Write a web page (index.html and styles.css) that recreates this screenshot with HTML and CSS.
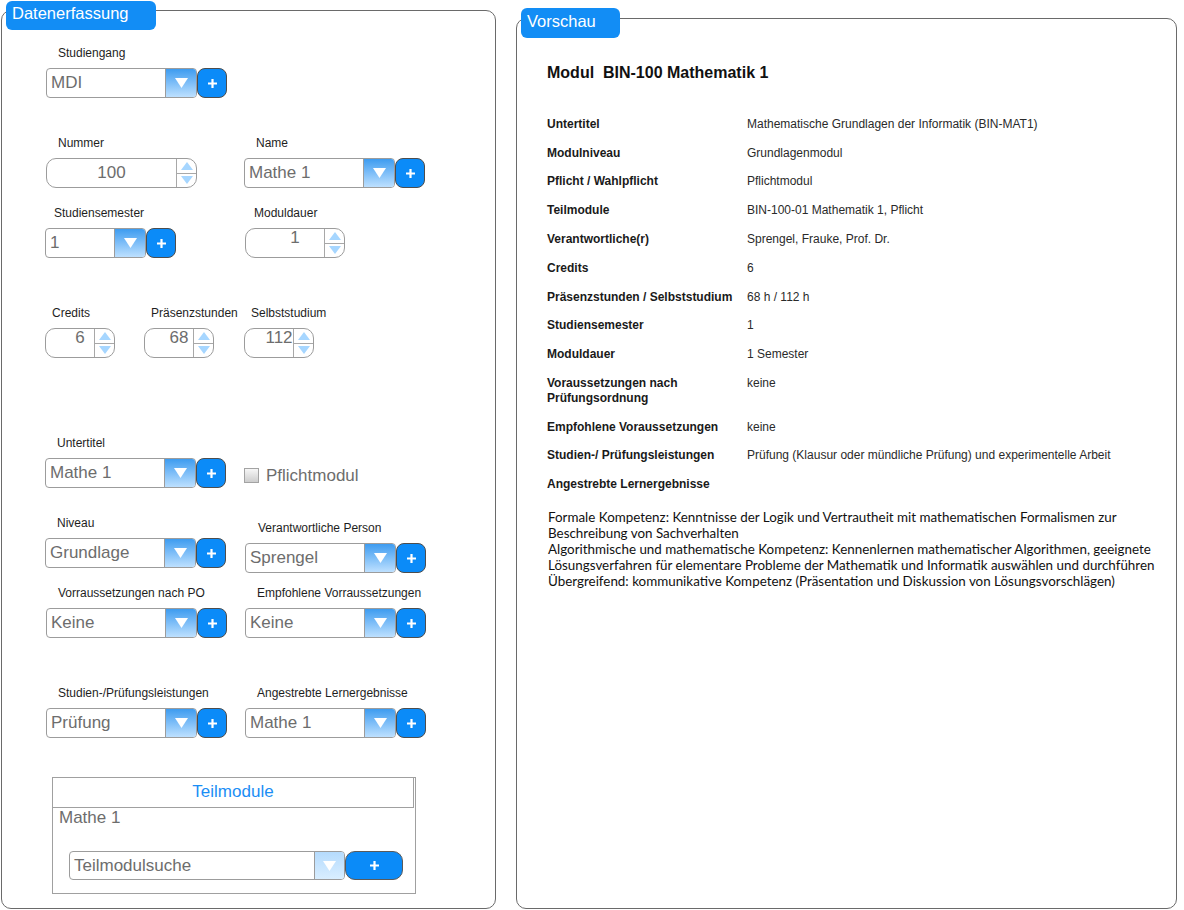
FILE: index.html
```html
<!DOCTYPE html>
<html lang="de">
<head>
<meta charset="utf-8">
<title>Modul erfassen</title>
<link rel="stylesheet" href="styles.css">
</head>
<body>
<div class="page">
  <section class="panel panel-left">
    <div class="tab tab-left">Datenerfassung</div>
    <div class="form">
      <div class="row r1">
        <div class="field ml1">
          <div class="lbl">Studiengang</div>
          <div class="combo"><div class="sel"><span class="val">MDI</span><span class="arrow"><svg width="13" height="10" viewBox="0 0 13 10"><polygon points="0,0 13,0 6.5,10" fill="#fff"/></svg></span></div><span class="plus"><svg width="9" height="9" viewBox="0 0 9 9"><path d="M3.4 0h2.2v9H3.4zM0 3.4h9v2.2H0z" fill="#fff"/></svg></span></div>
        </div>
      </div>

      <div class="row r2">
        <div class="field ml1">
          <div class="lbl">Nummer</div>
          <div class="spin w151"><span class="sv">100</span><span class="sa"><i><svg width="12" height="8" viewBox="0 0 12 8"><polygon points="6,0 12,8 0,8" fill="#a6d6ff"/></svg></i><i><svg width="12" height="8" viewBox="0 0 12 8"><polygon points="0,0 12,0 6,8" fill="#a6d6ff"/></svg></i></span></div>
        </div>
        <div class="field">
          <div class="lbl">Name</div>
          <div class="combo"><div class="sel"><span class="val">Mathe 1</span><span class="arrow"><svg width="13" height="10" viewBox="0 0 13 10"><polygon points="0,0 13,0 6.5,10" fill="#fff"/></svg></span></div><span class="plus"><svg width="9" height="9" viewBox="0 0 9 9"><path d="M3.4 0h2.2v9H3.4zM0 3.4h9v2.2H0z" fill="#fff"/></svg></span></div>
        </div>
      </div>

      <div class="row r3">
        <div class="field">
          <div class="lbl l9">Studiensemester</div>
          <div class="combo"><div class="sel narrow"><span class="val">1</span><span class="arrow"><svg width="13" height="10" viewBox="0 0 13 10"><polygon points="0,0 13,0 6.5,10" fill="#fff"/></svg></span></div><span class="plus"><svg width="9" height="9" viewBox="0 0 9 9"><path d="M3.4 0h2.2v9H3.4zM0 3.4h9v2.2H0z" fill="#fff"/></svg></span></div>
        </div>
        <div class="field ml1">
          <div class="lbl l9">Moduldauer</div>
          <div class="spin w100 top"><span class="sv">1</span><span class="sa"><i><svg width="12" height="8" viewBox="0 0 12 8"><polygon points="6,0 12,8 0,8" fill="#a6d6ff"/></svg></i><i><svg width="12" height="8" viewBox="0 0 12 8"><polygon points="0,0 12,0 6,8" fill="#a6d6ff"/></svg></i></span></div>
        </div>
      </div>

      <div class="row three r4">
        <div class="field">
          <div class="lbl l7">Credits</div>
          <div class="spin w70 top"><span class="sv">6</span><span class="sa"><i><svg width="12" height="8" viewBox="0 0 12 8"><polygon points="6,0 12,8 0,8" fill="#a6d6ff"/></svg></i><i><svg width="12" height="8" viewBox="0 0 12 8"><polygon points="0,0 12,0 6,8" fill="#a6d6ff"/></svg></i></span></div>
        </div>
        <div class="field">
          <div class="lbl l7">Präsenzstunden</div>
          <div class="spin w70 top"><span class="sv">68</span><span class="sa"><i><svg width="12" height="8" viewBox="0 0 12 8"><polygon points="6,0 12,8 0,8" fill="#a6d6ff"/></svg></i><i><svg width="12" height="8" viewBox="0 0 12 8"><polygon points="0,0 12,0 6,8" fill="#a6d6ff"/></svg></i></span></div>
        </div>
        <div class="field">
          <div class="lbl l7">Selbststudium</div>
          <div class="spin w70 top"><span class="sv">112</span><span class="sa"><i><svg width="12" height="8" viewBox="0 0 12 8"><polygon points="6,0 12,8 0,8" fill="#a6d6ff"/></svg></i><i><svg width="12" height="8" viewBox="0 0 12 8"><polygon points="0,0 12,0 6,8" fill="#a6d6ff"/></svg></i></span></div>
        </div>
      </div>

      <div class="row r5">
        <div class="field">
          <div class="lbl">Untertitel</div>
          <div class="combo"><div class="sel"><span class="val">Mathe 1</span><span class="arrow"><svg width="13" height="10" viewBox="0 0 13 10"><polygon points="0,0 13,0 6.5,10" fill="#fff"/></svg></span></div><span class="plus"><svg width="9" height="9" viewBox="0 0 9 9"><path d="M3.4 0h2.2v9H3.4zM0 3.4h9v2.2H0z" fill="#fff"/></svg></span></div>
        </div>
        <label class="chk"><span class="box"></span><span class="chk-text">Pflichtmodul</span></label>
      </div>

      <div class="row r6">
        <div class="field">
          <div class="lbl">Niveau</div>
          <div class="combo"><div class="sel"><span class="val">Grundlage</span><span class="arrow"><svg width="13" height="10" viewBox="0 0 13 10"><polygon points="0,0 13,0 6.5,10" fill="#fff"/></svg></span></div><span class="plus"><svg width="9" height="9" viewBox="0 0 9 9"><path d="M3.4 0h2.2v9H3.4zM0 3.4h9v2.2H0z" fill="#fff"/></svg></span></div>
        </div>
        <div class="field ml1 mt5">
          <div class="lbl l13">Verantwortliche Person</div>
          <div class="combo"><div class="sel"><span class="val">Sprengel</span><span class="arrow"><svg width="13" height="10" viewBox="0 0 13 10"><polygon points="0,0 13,0 6.5,10" fill="#fff"/></svg></span></div><span class="plus"><svg width="9" height="9" viewBox="0 0 9 9"><path d="M3.4 0h2.2v9H3.4zM0 3.4h9v2.2H0z" fill="#fff"/></svg></span></div>
        </div>
      </div>

      <div class="row r7">
        <div class="field ml1">
          <div class="lbl">Vorraussetzungen nach PO</div>
          <div class="combo"><div class="sel"><span class="val">Keine</span><span class="arrow"><svg width="13" height="10" viewBox="0 0 13 10"><polygon points="0,0 13,0 6.5,10" fill="#fff"/></svg></span></div><span class="plus"><svg width="9" height="9" viewBox="0 0 9 9"><path d="M3.4 0h2.2v9H3.4zM0 3.4h9v2.2H0z" fill="#fff"/></svg></span></div>
        </div>
        <div class="field ml1">
          <div class="lbl">Empfohlene Vorraussetzungen</div>
          <div class="combo"><div class="sel"><span class="val">Keine</span><span class="arrow"><svg width="13" height="10" viewBox="0 0 13 10"><polygon points="0,0 13,0 6.5,10" fill="#fff"/></svg></span></div><span class="plus"><svg width="9" height="9" viewBox="0 0 9 9"><path d="M3.4 0h2.2v9H3.4zM0 3.4h9v2.2H0z" fill="#fff"/></svg></span></div>
        </div>
      </div>

      <div class="row r8">
        <div class="field ml1">
          <div class="lbl">Studien-/Prüfungsleistungen</div>
          <div class="combo"><div class="sel"><span class="val">Prüfung</span><span class="arrow"><svg width="13" height="10" viewBox="0 0 13 10"><polygon points="0,0 13,0 6.5,10" fill="#fff"/></svg></span></div><span class="plus"><svg width="9" height="9" viewBox="0 0 9 9"><path d="M3.4 0h2.2v9H3.4zM0 3.4h9v2.2H0z" fill="#fff"/></svg></span></div>
        </div>
        <div class="field ml1">
          <div class="lbl">Angestrebte Lernergebnisse</div>
          <div class="combo"><div class="sel"><span class="val">Mathe 1</span><span class="arrow"><svg width="13" height="10" viewBox="0 0 13 10"><polygon points="0,0 13,0 6.5,10" fill="#fff"/></svg></span></div><span class="plus"><svg width="9" height="9" viewBox="0 0 9 9"><path d="M3.4 0h2.2v9H3.4zM0 3.4h9v2.2H0z" fill="#fff"/></svg></span></div>
        </div>
      </div>

      <div class="tm">
        <div class="tm-head">Teilmodule</div>
        <div class="tm-item">Mathe 1</div>
        <div class="combo tm-combo"><div class="sel wide"><span class="val">Teilmodulsuche</span><span class="arrow light"><svg width="13" height="10" viewBox="0 0 13 10"><polygon points="0,0 13,0 6.5,10" fill="#fff"/></svg></span></div><span class="plus wide"><svg width="9" height="9" viewBox="0 0 9 9"><path d="M3.4 0h2.2v9H3.4zM0 3.4h9v2.2H0z" fill="#fff"/></svg></span></div>
      </div>
    </div>
  </section>

  <section class="panel panel-right">
    <div class="tab tab-right">Vorschau</div>
    <div class="preview">
      <h1 class="pv-title">Modul&nbsp; BIN-100 Mathematik 1</h1>
      <div class="pv-table">
        <div class="pv-row"><div class="pv-k">Untertitel</div><div class="pv-v">Mathematische Grundlagen der Informatik (BIN-MAT1)</div></div>
        <div class="pv-row"><div class="pv-k">Modulniveau</div><div class="pv-v">Grundlagenmodul</div></div>
        <div class="pv-row"><div class="pv-k">Pflicht / Wahlpflicht</div><div class="pv-v">Pflichtmodul</div></div>
        <div class="pv-row"><div class="pv-k">Teilmodule</div><div class="pv-v">BIN-100-01 Mathematik 1, Pflicht</div></div>
        <div class="pv-row"><div class="pv-k">Verantwortliche(r)</div><div class="pv-v">Sprengel, Frauke, Prof. Dr.</div></div>
        <div class="pv-row"><div class="pv-k">Credits</div><div class="pv-v">6</div></div>
        <div class="pv-row"><div class="pv-k">Präsenzstunden / Selbststudium</div><div class="pv-v">68 h / 112 h</div></div>
        <div class="pv-row"><div class="pv-k">Studiensemester</div><div class="pv-v">1</div></div>
        <div class="pv-row"><div class="pv-k">Moduldauer</div><div class="pv-v">1 Semester</div></div>
        <div class="pv-row"><div class="pv-k">Voraussetzungen nach Prüfungsordnung</div><div class="pv-v">keine</div></div>
        <div class="pv-row"><div class="pv-k">Empfohlene Voraussetzungen</div><div class="pv-v">keine</div></div>
        <div class="pv-row"><div class="pv-k">Studien-/ Prüfungsleistungen</div><div class="pv-v">Prüfung (Klausur oder mündliche Prüfung) und experimentelle Arbeit</div></div>
        <div class="pv-row"><div class="pv-k">Angestrebte Lernergebnisse</div><div class="pv-v"></div></div>
      </div>
      <p class="pv-text">Formale Kompetenz: Kenntnisse der Logik und Vertrautheit mit mathematischen Formalismen zur Beschreibung von Sachverhalten<br>Algorithmische und mathematische Kompetenz: Kennenlernen mathematischer Algorithmen, geeignete Lösungsverfahren für elementare Probleme der Mathematik und Informatik auswählen und durchführen<br>Übergreifend: kommunikative Kompetenz (Präsentation und Diskussion von Lösungsvorschlägen)</p>
    </div>
  </section>
</div>
</body>
</html>
```

FILE: styles.css
```css
* { box-sizing: border-box; }
body {
  margin: 0;
  font-family: "Liberation Sans", Arial, sans-serif;
  background: #fff;
  color: #1e1e1e;
}
.page {
  display: flex;
  align-items: flex-start;
  width: 1184px;
  height: 910px;
}
.panel {
  position: relative;
  border: 1px solid #6a6a6a;
  border-radius: 10px;
}
.panel-left { margin: 10px 0 0 1px; width: 495px; height: 899px; }
.panel-right { margin: 18px 0 0 20px; width: 661px; height: 891px; }

.tab {
  position: absolute;
  background: #128df5;
  color: #fff;
  font-size: 16.5px;
  border-radius: 6px;
  white-space: nowrap;
}
.tab-left { left: 4px; top: -10px; width: 150px; height: 29px; line-height: 25px; padding-left: 6px; }
.tab-right { left: 4px; top: -11px; width: 99px; height: 30px; line-height: 27px; padding-left: 6px; }

/* form */
.form { padding: 34px 0 0 43px; }
.row { display: grid; grid-template-columns: 199px 1fr; align-items: start; }
.row.three { grid-template-columns: 99px 100px 1fr; }
.r2 { margin-top: 37px; }
.r3 { margin-top: 17px; }
.r4 { margin-top: 47px; }
.r5 { margin-top: 77px; }
.r6 { margin-top: 27px; }
.r7 { margin-top: 12px; }
.r8 { margin-top: 47px; }
.ml1 { margin-left: 1px; }
.mt5 { margin-top: 5px; }

.lbl {
  font-size: 12px;
  line-height: 14px;
  height: 15px;
  padding-top: 1px;
  margin-bottom: 8px;
  padding-left: 12px;
  white-space: nowrap;
  color: #1e1e1e;
}
.lbl.l9 { padding-left: 9px; }
.lbl.l7 { padding-left: 7px; }
.lbl.l13 { padding-left: 13px; }

.combo { display: flex; height: 30px; }
.sel {
  display: flex;
  width: 151px;
  height: 30px;
  border: 1px solid #9c9c9c;
  border-radius: 4px;
  overflow: hidden;
  background: #fff;
}
.sel.narrow { width: 101px; }
.sel.wide { width: 276px; height: 29px; }
.val {
  flex: 1;
  font-size: 17px;
  line-height: 28px;
  color: #6d6d6d;
  padding-left: 4px;
  white-space: nowrap;
  overflow: hidden;
}
.sel.wide .val { line-height: 27px; }
.arrow {
  width: 31px;
  display: flex;
  align-items: center;
  justify-content: center;
  background: linear-gradient(#3e9cf0, #bde0ff);
  border-left: 1px solid #9c9c9c;
}
.arrow.light { background: linear-gradient(#b5dbfd, #d9eeff); width: 30px; }
.plus {
  width: 30px;
  height: 30px;
  border: 1px solid #4d4d4d;
  border-radius: 8px;
  background: #0b8bf8;
  display: flex;
  align-items: center;
  justify-content: center;
}
.plus.wide { width: 58px; height: 29px; border-radius: 10px; border-color: #5a5a5a; }

.spin {
  display: flex;
  height: 30px;
  border: 1px solid #9c9c9c;
  border-radius: 10px;
  overflow: hidden;
  background: #fff;
}
.spin.w151 { width: 151px; }
.spin.w100 { width: 100px; }
.spin.w70 { width: 70px; }
.sv {
  flex: 1;
  font-size: 17px;
  line-height: 28px;
  color: #6d6d6d;
  text-align: center;
  white-space: nowrap;
}
.spin.top .sv { line-height: 18px; margin-right: -20px; }
.sa {
  position: relative;
  width: 20px;
  border-left: 1px solid #a8a8a8;
  display: flex;
  flex-direction: column;
}
.sa i { flex: 1; display: flex; align-items: center; justify-content: center; }
.sa i + i { border-top: 1px solid #a8a8a8; }

.chk {
  display: flex;
  align-items: center;
  height: 19px;
  margin-top: 31px;
}
.chk .box {
  width: 15px;
  height: 15px;
  border: 1px solid #a3a3a3;
  background: linear-gradient(#f6f6f6, #cdcdcd);
}
.chk-text {
  margin-left: 7px;
  font-size: 17px;
  line-height: 19px;
  color: #6d6d6d;
}

.tm {
  margin: 39px 0 0 7px;
  width: 364px;
  height: 117px;
  border: 1px solid #a0a0a0;
}
.tm-head {
  width: 361px;
  height: 30px;
  border-right: 1px solid #a0a0a0;
  border-bottom: 1px solid #a0a0a0;
  text-align: center;
  color: #1b8ef5;
  font-size: 17px;
  line-height: 27px;
}
.tm-item {
  margin-top: 1px;
  padding-left: 6px;
  font-size: 17px;
  line-height: 18px;
  color: #6d6d6d;
}
.tm-combo { margin: 24px 0 0 16px; height: 29px; }

/* preview */
.preview { padding: 45px 0 0 30px; }
.pv-title {
  margin: 0;
  font-size: 16px;
  font-weight: bold;
  line-height: 18px;
  color: #111;
}
.pv-table { margin-top: 28px; }
.pv-row {
  display: grid;
  grid-template-columns: 200px 1fr;
  padding: 6.9px 0;
  font-size: 12px;
  line-height: 15px;
}
.pv-k { font-weight: bold; padding-right: 10px; color: #1a1a1a; }
.pv-v { color: #2a2a2a; }
.pv-text {
  margin: 10px 0 0;
  width: 620px;
  padding-left: 1px;
  font-family: Lato, "Liberation Sans", sans-serif;
  font-size: 13.4px;
  line-height: 16px;
  color: #111;
}
```
